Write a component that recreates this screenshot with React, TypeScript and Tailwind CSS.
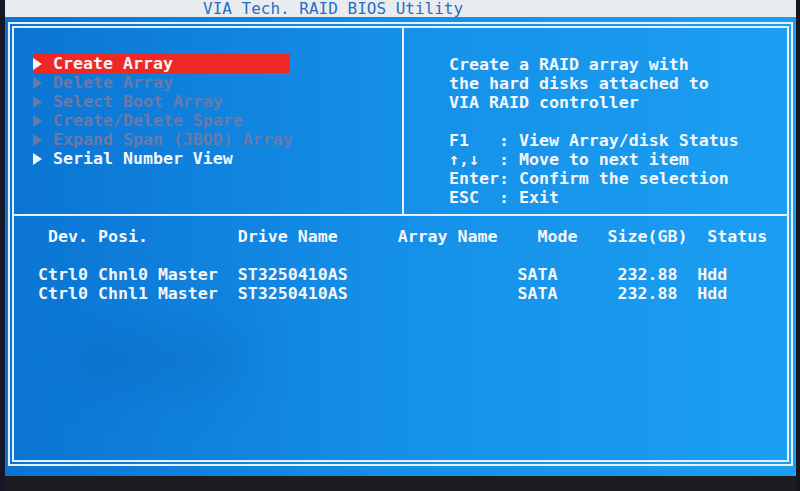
import React from "react";

const MONO = "font-['DejaVu_Sans_Mono','Liberation_Mono',monospace]";

function Arrow({ color }: { color: string }) {
  return (
    <svg width="9" height="12" viewBox="0 0 9 12" className="shrink-0">
      <polygon points="0,0 9,6 0,12" fill={color} />
    </svg>
  );
}

type Item = { label: string; state: "active" | "disabled" | "normal" };

const items: Item[] = [
  { label: "Create Array", state: "active" },
  { label: "Delete Array", state: "disabled" },
  { label: "Select Boot Array", state: "disabled" },
  { label: "Create/Delete Spare", state: "disabled" },
  { label: "Expand Span (JBOD) Array", state: "disabled" },
  { label: "Serial Number View", state: "normal" },
];

function MenuRow({ item }: { item: Item }) {
  const active = item.state === "active";
  const disabled = item.state === "disabled";
  return (
    <div
      className={
        "flex h-[19px] items-center whitespace-nowrap " +
        (active ? "w-[257px] bg-[#ee2824]" : "w-max")
      }
    >
      <div className="flex w-[20px] shrink-0 items-center">
        <Arrow color={disabled ? "#6b79a6" : "#f4f6fa"} />
      </div>
      <span className={disabled ? "text-[#6b79a6]" : "text-[#f4f6fa]"}>
        {item.label}
      </span>
    </div>
  );
}

const help = [
  "Create a RAID array with",
  "the hard disks attached to",
  "VIA RAID controller",
  "",
  "F1   : View Array/disk Status",
  "↑,↓  : Move to next item",
  "Enter: Confirm the selection",
  "ESC  : Exit",
];

const header = " Dev. Posi.         Drive Name      Array Name    Mode   Size(GB)  Status";
const rows = [
  "Ctrl0 Chnl0 Master  ST3250410AS                 SATA      232.88  Hdd",
  "Ctrl0 Chnl1 Master  ST3250410AS                 SATA      232.88  Hdd",
];

export default function App() {
  return (
    <div
      className={
        "relative flex h-[491px] w-[800px] overflow-hidden bg-[#1d1c21] " +
        MONO +
        " text-[16.6px] font-bold leading-[19px]"
      }
    >
      {/* left bezel */}
      <div className="h-full w-[5px] shrink-0 bg-[#161826]" />

      {/* screen area */}
      <div className="flex h-[476px] w-[791px] shrink-0 flex-col bg-linear-to-r from-[#0b74d3] via-[#1590e8] to-[#1b9ff2]">
        {/* title bar */}
        <div className="h-[17px] bg-[#e8ecef] pl-[198px] text-[16px] font-normal leading-[17px] text-[#2a6dc4]">
          VIA Tech. RAID BIOS Utility
        </div>

        {/* double-line frame */}
        <div className="pl-[3px] pr-[3px] pt-[5px]">
          <div className="flex h-[444px] flex-col border-[6px] border-double border-[#e6f0fa]">
            {/* upper half: menu + help */}
            <div className="flex h-[186px]">
              <div className="flex w-[388px] flex-col pl-[19px] pt-[26px]">
                {items.map((it) => (
                  <MenuRow key={it.label} item={it} />
                ))}
              </div>
              <div className="w-[2px] bg-[#e6f0fa]" />
              <div className="flex flex-1 flex-col pl-[45px] pt-[27px] text-[#f4f6fa]">
                {help.map((line, i) => (
                  <div key={i} className="h-[19px] whitespace-pre">
                    {line}
                  </div>
                ))}
              </div>
            </div>

            <div className="h-[2px] bg-[#e6f0fa]" />

            {/* drive list */}
            <div className="flex flex-1 flex-col pl-[24px] pt-[11px] text-[#f4f6fa]">
              <div className="h-[19px] whitespace-pre">{header}</div>
              <div className="h-[19px]" />
              {rows.map((r, i) => (
                <div key={i} className="h-[19px] whitespace-pre">
                  {r}
                </div>
              ))}
            </div>
          </div>
        </div>
      </div>

      {/* right bezel */}
      <div className="h-full flex-1 bg-[#17161e]" />

      {/* faint reflection on the glass */}
      <div className="pointer-events-none absolute left-[70px] top-[335px] h-[50px] w-[180px] rounded-full bg-[#003a7a]/15 blur-xl" />
    </div>
  );
}
